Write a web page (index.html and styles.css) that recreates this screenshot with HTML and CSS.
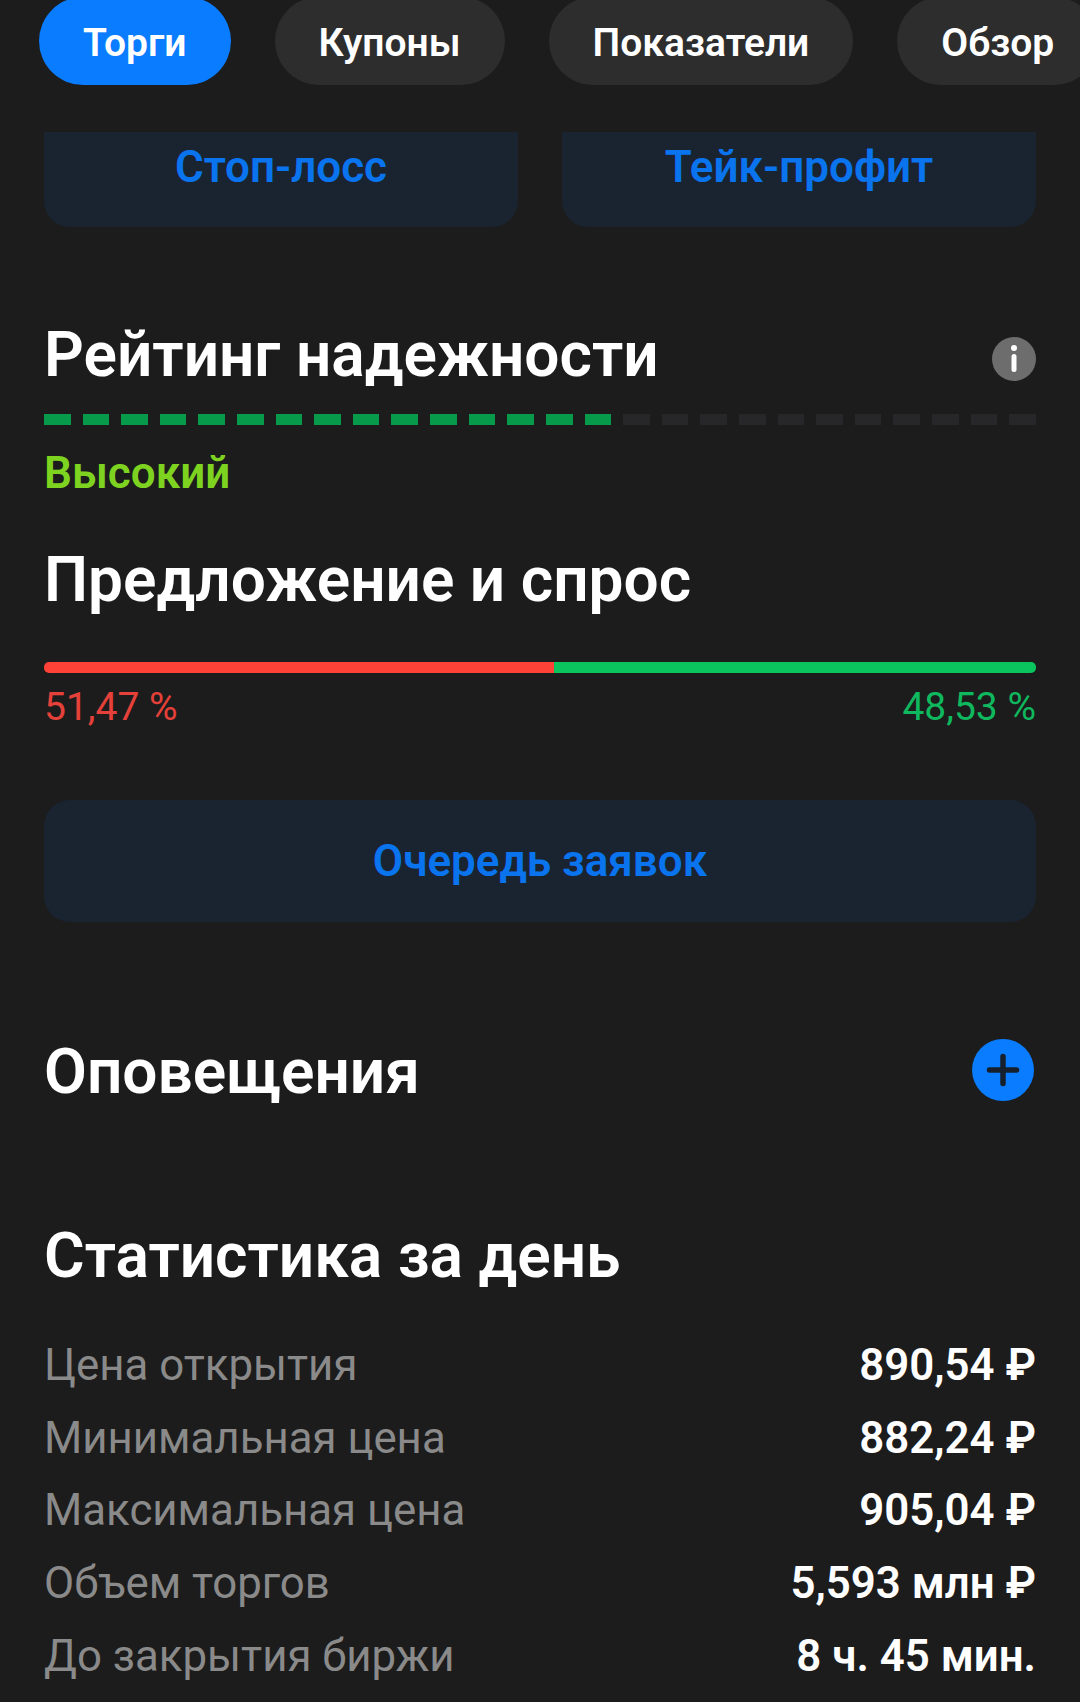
FILE: index.html
```html
<!DOCTYPE html>
<html lang="ru">
<head>
<meta charset="utf-8">
<title>Торги</title>
<link rel="stylesheet" href="styles.css">
</head>
<body>
<nav class="tabs">
  <div class="tab active">Торги</div>
  <div class="tab">Купоны</div>
  <div class="tab">Показатели</div>
  <div class="tab">Обзор</div>
</nav>
<main class="content">
  <div class="order-buttons">
    <div class="action small">Стоп-лосс</div>
    <div class="action small">Тейк-профит</div>
  </div>
  <section class="rating">
    <div class="head">
      <h2>Рейтинг надежности</h2>
      <svg class="info" viewBox="0 0 44 44" width="44" height="44"><circle cx="22" cy="22" r="22" fill="#6d6d6d"/><circle cx="22" cy="11" r="3" fill="#fff"/><rect x="19.5" y="17" width="5" height="18" rx="2.5" fill="#fff"/></svg>
    </div>
    <div class="segments">
      <i class="on"></i><i class="on"></i><i class="on"></i><i class="on"></i><i class="on"></i><i class="on"></i><i class="on"></i><i class="on"></i><i class="on"></i><i class="on"></i><i class="on"></i><i class="on"></i><i class="on"></i><i class="on"></i><i class="on"></i>
      <i></i><i></i><i></i><i></i><i></i><i></i><i></i><i></i><i></i><i></i><i></i>
    </div>
    <div class="level">Высокий</div>
  </section>
  <section class="depth">
    <h2>Предложение и спрос</h2>
    <div class="ratio"><span class="sell"></span><span class="buy"></span></div>
    <div class="ratio-labels"><span class="red">51,47 %</span><span class="green">48,53 %</span></div>
    <div class="action queue">Очередь заявок</div>
  </section>
  <section class="alerts">
    <h2>Оповещения</h2>
    <svg class="plus" viewBox="0 0 62 62" width="62" height="62"><circle cx="31" cy="31" r="31" fill="#0a7cff"/><path d="M31 17.5v27M17.5 31h27" stroke="#16202c" stroke-width="5.5" stroke-linecap="round"/></svg>
  </section>
  <section class="stats">
    <h2>Статистика за день</h2>
    <dl>
      <div class="row"><dt>Цена открытия</dt><dd>890,54 ₽</dd></div>
      <div class="row"><dt>Минимальная цена</dt><dd>882,24 ₽</dd></div>
      <div class="row"><dt>Максимальная цена</dt><dd>905,04 ₽</dd></div>
      <div class="row"><dt>Объем торгов</dt><dd>5,593 млн ₽</dd></div>
      <div class="row"><dt>До закрытия биржи</dt><dd>8 ч. 45 мин.</dd></div>
    </dl>
  </section>
</main>
</body>
</html>
```

FILE: styles.css
```css
* { box-sizing: border-box; }
html, body { margin: 0; padding: 0; }
body {
  width: 1080px;
  height: 1702px;
  overflow: hidden;
  background: #1c1c1c;
  color: #fff;
  font-family: Roboto, "Noto Sans", sans-serif;
}
.tabs {
  display: flex;
  gap: 44px;
  padding-left: 39px;
  height: 85px;
  overflow: hidden;
  white-space: nowrap;
}
.tab {
  flex: none;
  height: 88px;
  margin-top: -3px;
  padding: 0 44px;
  border-radius: 44px;
  background: #2d2d2d;
  font-size: 39px;
  font-weight: 600;
  line-height: 92px;
}
.tab.active { background: #0a7cff; }
.content { padding: 47px 44px 0; }
.order-buttons { display: flex; gap: 44px; }
.action {
  display: flex;
  align-items: center;
  justify-content: center;
  background: #1a2430;
  color: #0a73ee;
  font-size: 44px;
  font-weight: 600;
}
.action.small {
  flex: 1;
  height: 95px;
  padding-bottom: 26px;
  border-radius: 0 0 26px 26px;
}
h2 {
  margin: 0;
  font-size: 62.2px;
  font-weight: 600;
  line-height: 70px;
}
.rating { margin-top: 93px; }
.head { display: flex; justify-content: space-between; align-items: center; }
.info { flex: none; margin-top: 8px; }
.segments { display: flex; gap: 12px; margin-top: 24px; }
.segments i { flex: 1; height: 11px; background: #27272a; }
.segments i.on { background: #079a4b; }
.level {
  margin-top: 24px;
  font-size: 44px;
  font-weight: 600;
  line-height: 48px;
  color: #7ed321;
}
.depth { margin-top: 48px; }
.ratio { display: flex; height: 11px; margin-top: 47px; border-radius: 5px; overflow: hidden; }
.sell { width: 510px; background: #ff4238; }
.buy { flex: 1; background: #0ac45e; }
.ratio-labels {
  display: flex;
  justify-content: space-between;
  margin-top: 11px;
  font-size: 39px;
  line-height: 46px;
}
.red { color: #e5413a; }
.green { color: #0fb85e; }
.queue {
  height: 122px;
  margin-top: 70px;
  border-radius: 26px;
}
.alerts {
  display: flex;
  justify-content: space-between;
  align-items: center;
  margin-top: 115px;
  padding-right: 2px;
}
.plus { margin-bottom: 4px; }
.stats { margin-top: 114px; }
dl { margin: 38px 0 0; }
.row {
  display: flex;
  justify-content: space-between;
  height: 72.6px;
  align-items: center;
  font-size: 43.8px;
}
dt { color: #8a8a8a; }
dd { margin: 0; font-weight: 600; }
```
